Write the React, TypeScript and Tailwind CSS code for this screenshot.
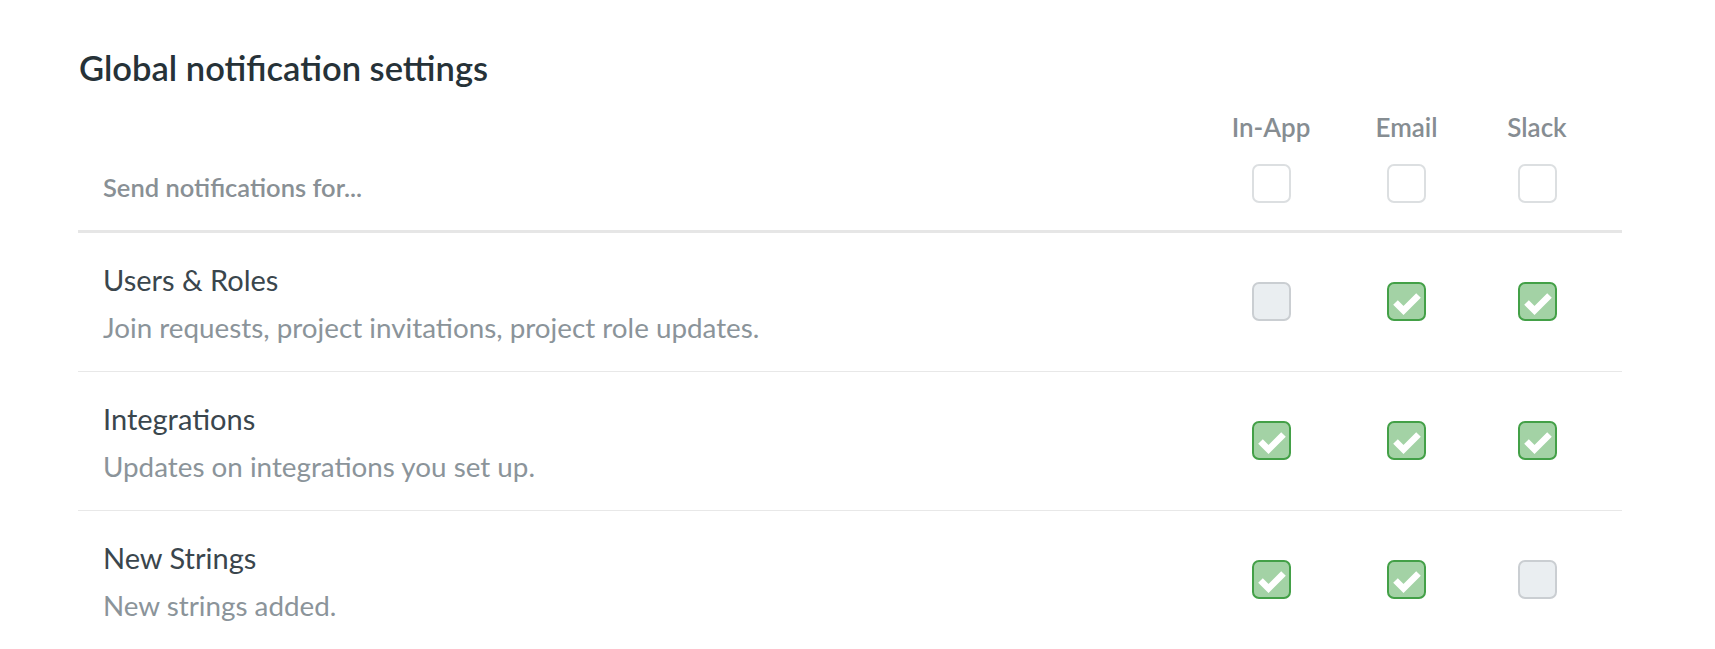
const rows = [
  { title: "Users & Roles", desc: "Join requests, project invitations, project role updates.", values: ["disabled", "on", "on"] },
  { title: "Integrations", desc: "Updates on integrations you set up.", values: ["on", "on", "on"] },
  { title: "New Strings", desc: "New strings added.", values: ["on", "on", "disabled"] },
];

const channels = ["In-App", "Email", "Slack"];

function Box({ state }: { state: string }) {
  if (state === "on") {
    return (
      <div className="flex h-[39px] w-[39px] items-center justify-center rounded-[7px] border-2 border-[#43a047] bg-[#a3d2a5]">
        <svg width="35" height="35" viewBox="0 0 35 35">
          <polyline points="6.5,18.5 14.5,26.5 29.5,11.5" fill="none" stroke="#ffffff" strokeWidth="6.5" strokeLinecap="butt" strokeLinejoin="miter" />
        </svg>
      </div>
    );
  }
  if (state === "disabled") {
    return <div className="h-[39px] w-[39px] rounded-[7px] border-2 border-[#caced2] bg-[#eaeef1]" />;
  }
  return <div className="h-[39px] w-[39px] rounded-[7px] border-2 border-[#dcdfe1] bg-white" />;
}

export default function App() {
  return (
    <div className="min-h-screen bg-white pl-[78px] pr-[93px] pt-[47px]" style={{ fontFamily: "Lato, 'Noto Sans', sans-serif" }}>
      <h1 className="pl-px text-[34.5px] font-semibold leading-[1.2] text-[#263238]">Global notification settings</h1>

      <div className="mt-[24px] grid grid-cols-[1fr_140px_131px_130px] items-end pr-[20px] pb-[27px] border-b-[3px] border-[#e6e6e6]">
        <div className="pl-[25px] text-[25.5px] font-semibold leading-[1.2] text-[#899095]">Send notifications for...</div>
        {channels.map((c) => (
          <div key={c} className="flex flex-col items-center gap-[20px]">
            <span className="text-[26px] font-semibold leading-[1.2] text-[#868d92]">{c}</span>
            <Box state="off" />
          </div>
        ))}
      </div>

      {rows.map((r) => (
        <div key={r.title} className="grid h-[139px] grid-cols-[1fr_140px_131px_130px] items-center pr-[20px] border-b border-[#e8e8e8]">
          <div className="pl-[25px] pt-[4px]">
            <div className="text-[29px] leading-[1.2] text-[#3a464d]">{r.title}</div>
            <div className="mt-[14px] text-[27.8px] leading-[1.2] text-[#8b949a]">{r.desc}</div>
          </div>
          {r.values.map((v, i) => (
            <div key={i} className="flex justify-center">
              <Box state={v} />
            </div>
          ))}
        </div>
      ))}
    </div>
  );
}
